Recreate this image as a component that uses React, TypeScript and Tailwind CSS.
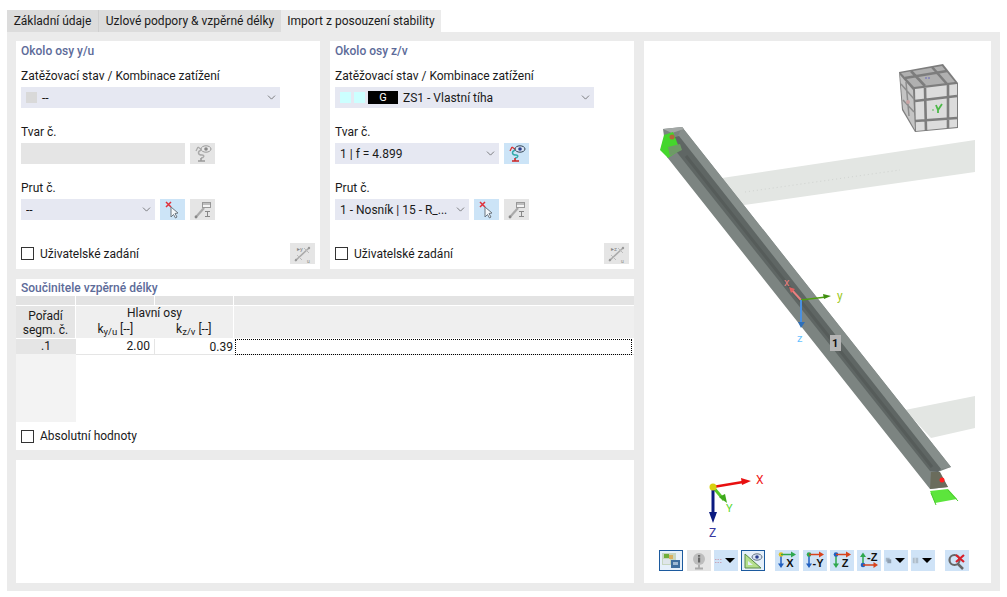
import React from 'react';
import { ChevronDown } from 'lucide-react';

const sans = { fontFamily: 'Roboto, "Noto Sans", sans-serif' };
const label = { fontFamily: '"Liberation Sans", sans-serif' };

const Select = ({ w, children }: { w: string; children: React.ReactNode }) => (
  <div className={`${w} h-[21px] bg-[#e6e8f2] flex items-center pl-[5px] pr-[2px] text-[12px] text-[#1a1a1a]`}>
    <div className="flex-1 flex items-center gap-[5px] whitespace-nowrap overflow-hidden">{children}</div>
    <ChevronDown size={13} strokeWidth={1.2} className="text-[#444]" />
  </div>
);

const IconBtn = ({ tone, children }: { tone: 'blue' | 'gray'; children: React.ReactNode }) => (
  <div className={`w-[25px] h-[21px] flex items-center justify-center ${tone === 'blue' ? 'bg-[#cce4f7]' : 'bg-[#e5e5e5]'}`}>
    {children}
  </div>
);

const ShapeIcon = ({ on }: { on?: boolean }) => (
  <svg width="20" height="20" viewBox="0 0 20 20" fill="none">
    <path d="M5 3 L9 6 M5 3 L3 7" stroke={on ? '#d33' : '#aaa'} strokeWidth="1.3" />
    <path d="M8 6 C4 8 5 11 9 11 C12 11 11 14 8 14" stroke={on ? '#3aa' : '#aaa'} strokeWidth="1.4" />
    <path d="M5 17 h7 M8 14 v3" stroke={on ? '#c22' : '#999'} strokeWidth="1.5" />
    <ellipse cx="13" cy="5" rx="5" ry="3.2" fill={on ? '#d8e4f4' : '#e8e8e8'} stroke={on ? '#345' : '#999'} />
    <circle cx="13" cy="5" r="1.8" fill={on ? '#2a3f8f' : '#888'} />
  </svg>
);

const PickIcon = () => (
  <svg width="20" height="20" viewBox="0 0 20 20" fill="none">
    <path d="M3 2 L8 7 M8 2 L3 7" stroke="#e0303a" strokeWidth="1.5" />
    <path d="M8 7 L8 17 L10.5 14.5 L12.5 18 L14 17 L12 13.5 L15 13 Z" fill="#f4f8fb" stroke="#6b7680" />
  </svg>
);

const MemberIcon = () => (
  <svg width="20" height="20" viewBox="0 0 20 20" fill="none">
    <path d="M3 17 L11 8" stroke="#aaa" strokeWidth="2.2" />
    <circle cx="3" cy="17" r="1.4" fill="#888" />
    <rect x="9.500" y="2.500" width="8" height="5" fill="#f4f4f4" stroke="#999" />
    <path d="M9.500 4 h8" stroke="#888" />
    <path d="M12 11.500 h5 M14.500 11.500 v5 M12 16.500 h5" stroke="#888" />
  </svg>
);

const UserIcon = ({ axis }: { axis: string }) => (
  <svg width="22" height="20" viewBox="0 0 22 20" fill="none">
    <path d="M3 17 L17 4" stroke="#aaa" strokeWidth="1.6" />
    <path d="M5 11 L10 16 M12 4 L17 9" stroke="#bbb" />
    <circle cx="4" cy="16" r="1.2" fill="#999" />
    <circle cx="17" cy="4" r="1.2" fill="#999" />
    <text x="5" y="7" fontSize="6" fill="#888">▸{axis}</text>
    <text x="15" y="19" fontSize="5" fill="#888">u</text>
  </svg>
);

const Check = ({ label }: { label: string }) => (
  <div className="flex items-center gap-[6px]">
    <div className="w-[13px] h-[13px] border border-[#333] bg-white" />
    <span className="text-[12px] text-[#1a1a1a]">{label}</span>
  </div>
);

const Title = ({ children }: { children: React.ReactNode }) => (
  <div className="text-[12px] font-medium text-[#5d6b99] leading-[16px]">{children}</div>
);

const Label = ({ children, className }: { children: React.ReactNode; className?: string }) => (
  <div className={`text-[12px] leading-[16px] text-[#1a1a1a] ${className ?? ''}`}>{children}</div>
);

const AxisPanel = ({ title, axis, active }: { title: string; axis: string; active?: boolean }) => (
  <div className="w-[304px] h-[228px] bg-white pl-[5px] pr-[5px] pt-[2px] flex flex-col">
    <Title>{title}</Title>
    <Label className="mt-[9px] mb-[3px]">Zatěžovací stav / Kombinace zatížení</Label>
    <Select w="w-[259px]">
      {active ? (
        <>
          <span className="w-[11px] h-[11px] bg-[#ccffff]" />
          <span className="w-[11px] h-[11px] bg-[#ccffff] -ml-[2px]" />
          <span className="w-[30px] h-[13px] bg-black text-white text-[11px] leading-[13px] text-center -ml-[2px]">G</span>
          <span>ZS1 - Vlastní tíha</span>
        </>
      ) : (
        <>
          <span className="w-[11px] h-[11px] bg-[#d9d9d9]" />
          <span>--</span>
        </>
      )}
    </Select>
    <Label className="mt-[16px] mb-[3px]">Tvar č.</Label>
    <div className="flex gap-[5px]">
      {active ? <Select w="w-[164px]">1 | f = 4.899</Select> : <div className="w-[164px] h-[21px] bg-[#e5e5e5]" />}
      <IconBtn tone={active ? 'blue' : 'gray'}><ShapeIcon on={active} /></IconBtn>
    </div>
    <Label className="mt-[16px] mb-[3px]">Prut č.</Label>
    <div className="flex gap-[5px]">
      <Select w="w-[134px]">{active ? '1 - Nosník | 15 - R_...' : '--'}</Select>
      <IconBtn tone="blue"><PickIcon /></IconBtn>
      <IconBtn tone="gray"><MemberIcon /></IconBtn>
    </div>
    <div className="mt-[23px] flex items-center justify-between">
      <Check label="Uživatelské zadání" />
      <IconBtn tone="gray"><UserIcon axis={axis} /></IconBtn>
    </div>
  </div>
);

const Sub = ({ s }: { s: string }) => (
  <span>k<sub className="text-[9.5px] align-baseline relative top-[2px]">{s}</sub> [--]</span>
);

const CoefTable = () => (
  <div className="text-[12px] text-[#1a1a1a]">
    <div className="grid grid-cols-[59px_78px_78px_1fr] h-[9px] gap-x-px bg-white">
      <div className="bg-[#e3e3e3]" />
      <div className="bg-[#e3e3e3]" />
      <div className="bg-[#e3e3e3]" />
      <div className="bg-[#e3e3e3]" />
    </div>
    <div className="grid grid-cols-[59px_157px_1fr] gap-x-px mt-px h-[32px]">
      <div className="bg-[#e5e5e5] text-center leading-[14px] pt-[3px]">Pořadí<br />segm. č.</div>
      <div className="bg-[#efefef] flex flex-col">
        <div className="text-center leading-[15px]">Hlavní osy</div>
        <div className="grid grid-cols-2 text-center leading-[16px]">
          <Sub s="y/u" />
          <Sub s="z/v" />
        </div>
      </div>
      <div className="bg-[#efefef]" />
    </div>
    <div className="flex h-[83px] mt-px">
      <div className="w-[60px] bg-[#f3f3f3]">
        <div className="h-[15px] bg-[#e5e5e5] text-center leading-[15px]">.1</div>
      </div>
      <div className="flex-1 min-w-0">
        <div className="grid grid-cols-[79px_79px_1fr] h-[16px] border-b border-[#e5e5e5] leading-[15px]">
          <div className="text-right pr-[4px] border-r border-[#e5e5e5]">2.00</div>
          <div className="text-right pr-[1px] pt-[1px]">0.39</div>
          <div className="ml-px mr-[2px] border border-dotted border-black" />
        </div>
      </div>
    </div>
  </div>
);

const Beam = () => (
  <svg className="absolute inset-0" width="347" height="542" viewBox="644 41 347 542" fill="none">
    {/* background planes */}
    <polygon points="722,178 975,140 975,172 737,206" fill="#e3e6e3" />
    <path d="M745 192 L900 170" stroke="#d0d3d0" strokeDasharray="1 3" />
    <polygon points="905,410 975,396 975,428 931,438" fill="#e3e6e3" />
    {/* navigation cube */}
    <polygon points="899,72 943,64 958,83 958,128 915,132 902,110" fill="#7d7d7d" />
    <polygon points="901,73 942,66 955,82 914,87" fill="#b0b0b0" />
    <polygon points="915,89 957,84 957,127 916,131" fill="#dcdcdc" />
    <polygon points="900,75 913,90 915,130 903,109" fill="#c4c4c4" />
    <path d="M925 88 L926 131 M948 85 L948 128 M915 101 L957 96 M915 121 L957 118" stroke="#7d7d7d" strokeWidth="2.600" />
    <path d="M911 71 L925 86 M932 67 L947 84 M905 78 L947 71" stroke="#7d7d7d" strokeWidth="2.600" />
    <path d="M906 82 L909 116 M901 84 L914 99 M903 100 L914 112" stroke="#8d8d8d" strokeWidth="1.500" />
    <circle cx="908" cy="102" r="2" fill="#c9a3a3" />
    <path d="M925 78 h6" stroke="#8080b8" strokeWidth="1.500" strokeDasharray="2 1" />
    <path d="M936 105 L938 110 L942 104 M938 110 V113" stroke="#4cb848" strokeWidth="1.800" />
    <circle cx="933" cy="110" r="0.800" fill="#4cb848" />
    {/* member */}
    <polygon points="663,129 682,127 951,467 943,470 938,472 948,487 930,489 667,157" fill="#7c8481" />
    <polygon points="682,127 951,467 941,469 678,136" fill="#868e8b" />
    <polygon points="675,150 672,138 679,136 941,469 938,472 930,471" fill="#5f6664" />
    <path d="M686 156 L932 467" stroke="#565c5a" strokeWidth="3" />
    <polygon points="663,129 682,127 684,129 672,133" fill="#a3a8a6" />
    <polygon points="931,472 940,472 948,487 930,489" fill="#6a6c5c" />
    {/* supports */}
    <polygon points="664,135 673,132 680,150 668,158 660,150" fill="#44d62c" />
    <polygon points="668,147 680,144 682,150 670,156" fill="#6e9a66" />
    <polygon points="930,491 948,489 957,499 935,503" fill="#5ce53c" />
    <path d="M931 493 L936 505 M948 490 L958 501" stroke="#4ac82e" />
    <circle cx="672" cy="137" r="2.500" fill="#b3653c" />
    <circle cx="942" cy="480" r="2.500" fill="#ff2020" />
    {/* local axes */}
    <path d="M801 300 L791 289" stroke="#e88080" strokeWidth="2" />
    <polygon points="789,287 795,289 791,293" fill="#e06060" />
    <path d="M801 300 L826 297" stroke="#4f9e12" strokeWidth="1.500" />
    <polygon points="831,296 823,294 824,299" fill="#3f8f10" />
    <path d="M801 300 V324" stroke="#4a90e0" strokeWidth="2" />
    <polygon points="801,328 798,322 805,322" fill="#2f6fb8" />
    <text x="784" y="286" fontSize="11" fill="#e88080" style={sans}>x</text>
    <text x="837" y="300" fontSize="12" fill="#9cc820" style={sans}>y</text>
    <text x="797" y="342" fontSize="11" fill="#66c2ff" style={sans}>z</text>
    <rect x="830" y="335" width="11" height="16" fill="#b5b5b5" />
    <text x="832" y="347" fontSize="11" fontWeight="700" fill="#111" style={sans}>1</text>
    {/* global axes */}
    <path d="M713 487 L743 482" stroke="#e81010" strokeWidth="2.500" />
    <polygon points="751,481 741,478 742,485" fill="#e81010" />
    <path d="M713 487 L724 500" stroke="#58c828" strokeWidth="3" />
    <polygon points="727,503 719,497 725,494" fill="#3ea81c" />
    <path d="M713 487 V514" stroke="#0a1a80" strokeWidth="3" />
    <polygon points="713,523 709,512 717,512" fill="#0a1a80" />
    <circle cx="713" cy="487" r="3.500" fill="#d8d010" />
    <text x="756" y="484" fontSize="12" fill="#f01818" style={sans}>X</text>
    <text x="726" y="512" fontSize="11" fill="#58d828" style={sans}>Y</text>
    <text x="709" y="537" fontSize="12" fill="#3838a0" style={sans}>Z</text>
  </svg>
);

const ToolBtn = ({ selected, gray, wide, children, className }: { selected?: boolean; gray?: boolean; wide?: boolean; children?: React.ReactNode; className?: string }) => (
  <div className={`w-[24px] h-[21px] flex items-center justify-center ${gray ? 'bg-[#e5e5e5]' : selected ? 'bg-[#e6f0fa] border-[1.5px] border-[#1c5a9e]' : 'bg-[#cfe3f7]'} ${className ?? ''}`}>
    {children}
    {wide && <span className="w-0 h-0 ml-[3px] mr-[2px] border-l-[5px] border-r-[5px] border-t-[5px] border-l-transparent border-r-transparent border-t-black" />}
  </div>
);

const AxisIcon = ({ text, v, h, dot, up }: { text: string; v: string; h: string; dot: string; up?: boolean }) => (
  <svg width="22" height="19" viewBox="0 0 22 19" fill="none">
    {up ? (
      <>
        <path d="M5 14 V5" stroke={v} strokeWidth="1.500" />
        <polygon points="5,1.500 2,6 8,6" fill={v} />
        <circle cx="5" cy="14" r="2.300" fill={dot} />
        <path d="M5 14 H16" stroke={h} strokeWidth="1.500" />
        <polygon points="20,14 15.500,11 15.500,17" fill={h} />
      </>
    ) : (
      <>
        <path d="M5 4 V13" stroke={v} strokeWidth="1.500" />
        <polygon points="5,17 2,12.500 8,12.500" fill={v} />
        <circle cx="5" cy="3.500" r="2.300" fill={dot} />
        <path d="M5 3.500 H15" stroke={h} strokeWidth="1.500" />
        <polygon points="20,3.500 15,0.500 15,6.500" fill={h} />
      </>
    )}
    <text x={up ? 9 : 14} y={up ? 10 : 16} fontSize="11" fontWeight="700" fill="#111" style={label} textAnchor={up ? 'start' : 'middle'}>{text}</text>
  </svg>
);

const Toolbar = () => (
  <div className="absolute left-[15px] top-[509px] flex">
    <ToolBtn selected>
      <svg width="20" height="17" viewBox="0 0 20 17">
        <rect x="1" y="1" width="14" height="12" fill="#c7d6c0" />
        <rect x="3" y="2" width="5" height="4" fill="#6fae3a" />
        <rect x="8" y="3" width="4" height="4" fill="#d8b060" />
        <rect x="2" y="7" width="7" height="5" fill="#dfe6ea" />
        <rect x="10" y="8" width="9" height="8" fill="#3f6f9f" />
        <rect x="12" y="10" width="5" height="3" fill="#9fbad4" />
      </svg>
    </ToolBtn>
    <ToolBtn gray className="ml-[4px]">
      <svg width="18" height="18" viewBox="0 0 18 18">
        <path d="M5 16.500 h8 M9 12 v4" stroke="#aaa" strokeWidth="1.800" />
        <circle cx="9" cy="7" r="6" fill="#bdbdbd" />
        <rect x="8" y="3" width="2.200" height="1.800" fill="#666" />
        <rect x="8" y="5.500" width="2.200" height="5" fill="#666" />
      </svg>
    </ToolBtn>
    <ToolBtn wide className="ml-[3px]">
      <svg width="7" height="8" viewBox="0 0 7 8"><path d="M0 2.500 h7 M0 5.500 h7" stroke="#c9a6b8" strokeDasharray="1.500 1" /></svg>
    </ToolBtn>
    <ToolBtn selected className="ml-[3px]">
      <svg width="20" height="18" viewBox="0 0 20 18">
        <polygon points="2,2 2,16 18,16" fill="#b5e08c" stroke="#5a8a4a" />
        <polygon points="5,9 5,13 10,13" fill="#e6f0fa" />
        <ellipse cx="14" cy="5" rx="5" ry="3.200" fill="#d8e4f4" stroke="#345" strokeWidth="0.700" />
        <circle cx="14" cy="5" r="1.800" fill="#2a3f8f" />
      </svg>
    </ToolBtn>
    <ToolBtn className="ml-[10px]"><AxisIcon text="X" v="#1f5fc0" h="#2fa84f" dot="#e0c020" /></ToolBtn>
    <ToolBtn className="ml-[4px]"><AxisIcon text="-Y" v="#1f5fc0" h="#d8431c" dot="#2fa84f" /></ToolBtn>
    <ToolBtn className="ml-[3px]"><AxisIcon text="Z" v="#2fa84f" h="#d8431c" dot="#1f5fc0" /></ToolBtn>
    <ToolBtn className="ml-[3px]"><AxisIcon text="-Z" v="#2fa84f" h="#d8431c" dot="#1f5fc0" up /></ToolBtn>
    <ToolBtn wide className="ml-[3px]">
      <svg width="7" height="7" viewBox="0 0 9 9"><rect x="1" y="1" width="5" height="5" fill="#a5b5c5" /><rect x="3" y="3" width="5" height="5" fill="#8f9fb0" /></svg>
    </ToolBtn>
    <ToolBtn wide className="ml-[3px]">
      <svg width="7" height="7" viewBox="0 0 9 9"><rect x="1" y="1" width="7" height="7" fill="#aebdcb" /><path d="M4 1 v7" stroke="#dfe8f0" /></svg>
    </ToolBtn>
    <ToolBtn className="ml-[10px]">
      <svg width="20" height="18" viewBox="0 0 20 18" fill="none">
        <circle cx="7.500" cy="8" r="5" stroke="#666" strokeWidth="2.200" />
        <path d="M11 12 L16 17" stroke="#666" strokeWidth="2.500" />
        <path d="M9 3 L17 10 M17 3 L9 10" stroke="#d8202a" strokeWidth="2.200" />
      </svg>
    </ToolBtn>
  </div>
);

export default function App() {
  return (
    <div className="w-[1007px] h-[597px] bg-white pt-[10px] px-[7px] pb-[6px] flex flex-col overflow-hidden" style={sans}>
      <div className="flex h-[23px] text-[12px] text-[#1a1a1a] leading-[23px]">
        <div className="w-[92px] bg-[#dcdcdc] text-center border-r border-[#cfcfcf]">Základní údaje</div>
        <div className="w-[182px] bg-[#dcdcdc] text-center">Uzlové podpory &amp; vzpěrné délky</div>
        <div className="w-[160px] bg-[#ebebeb] text-center">Import z posouzení stability</div>
      </div>
      <div className="flex-1 bg-[#ebebeb] -mt-px pt-[9px] px-[9px] pb-[8px] flex gap-[10px] min-h-0">
        <div className="w-[618px] flex flex-col gap-[10px]">
          <div className="flex gap-[10px]">
            <AxisPanel title="Okolo osy y/u" axis="y" />
            <AxisPanel title="Okolo osy z/v" axis="z" active />
          </div>
          <div className="h-[171px] bg-white pt-[1px]">
            <div className="px-[5px]"><Title>Součinitele vzpěrné délky</Title></div>
            <CoefTable />
            <div className="pl-[5px] mt-[5px]"><Check label="Absolutní hodnoty" /></div>
          </div>
          <div className="flex-1 bg-white" />
        </div>
        <div className="w-[347px] bg-white relative">
          <Beam />
          <Toolbar />
        </div>
      </div>
    </div>
  );
}
